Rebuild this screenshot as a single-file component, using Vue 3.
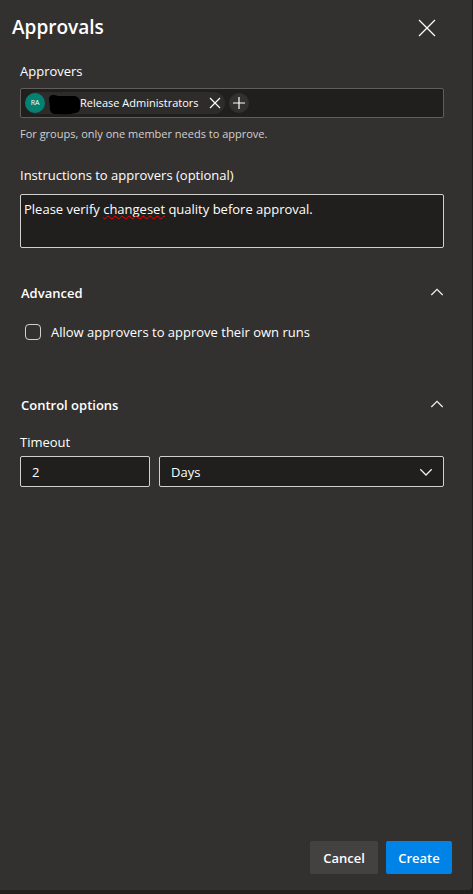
<script setup>
import { computed, ref } from 'vue'

const approvers = ref([{ initials: 'RA', name: 'Release Administrators' }])
const instructions = ref('Please verify changeset quality before approval.')
const allowOwnRuns = ref(false)
const timeout = ref('2')
const unit = ref('Days')
const advancedOpen = ref(true)
const controlOpen = ref(true)

const flaggedWords = ['changeset']
const instructionParts = computed(() =>
  instructions.value
    .split(/(\s+)/)
    .map((text) => ({ text, flagged: flaggedWords.includes(text) }))
)
</script>

<template>
  <form class="panel" @submit.prevent>
    <header class="header">
      <h1 class="title">Approvals</h1>
      <button type="button" class="icon-button close" aria-label="Close">
        <svg width="18" height="18" viewBox="0 0 18 18">
          <path d="M1 1 17 17M17 1 1 17" />
        </svg>
      </button>
    </header>

    <main class="content">
      <section class="field">
        <span id="approvers-label" class="label">Approvers</span>
        <div class="picker" role="group" aria-labelledby="approvers-label">
          <div v-for="person in approvers" :key="person.name" class="chip">
            <span class="avatar">{{ person.initials }}</span>
            <span class="name">
              <svg class="redaction" width="31" height="20" viewBox="0 0 31 20">
                <path d="M0 3Q1 0 4 0Q7 0 9 1H26Q30 2 31 6V14Q30 18 26 18Q20 20 12 19H6Q2 19 1 15Z" />
              </svg>
              <span>{{ person.name }}</span>
            </span>
            <button type="button" class="icon-button remove" aria-label="Remove approver">
              <svg width="12" height="12" viewBox="0 0 12 12">
                <path d="M1 1 11 11M11 1 1 11" />
              </svg>
            </button>
          </div>
          <button type="button" class="icon-button add" aria-label="Add approver">
            <svg width="14" height="14" viewBox="0 0 14 14">
              <path d="M7 1V13M1 7H13" />
            </svg>
          </button>
        </div>
        <p class="help">For groups, only one member needs to approve.</p>
      </section>

      <section class="field instructions">
        <label class="label" for="instructions">Instructions to approvers (optional)</label>
        <div class="note">
          <textarea id="instructions" v-model="instructions" class="note-text" spellcheck="false"></textarea>
          <div class="note-text note-marks" aria-hidden="true"><span
            v-for="(part, i) in instructionParts"
            :key="i"
            :class="{ flagged: part.flagged }"
          >{{ part.text }}</span></div>
        </div>
      </section>

      <section class="group">
        <button type="button" class="group-toggle" :aria-expanded="advancedOpen" @click="advancedOpen = !advancedOpen">
          <span>Advanced</span>
          <svg class="chevron" width="14" height="10" viewBox="0 0 14 10" :class="{ flipped: !advancedOpen }">
            <path d="M1.3 7 7 1.3 12.7 7" />
          </svg>
        </button>
        <label v-if="advancedOpen" class="check">
          <input v-model="allowOwnRuns" type="checkbox" />
          <span>Allow approvers to approve their own runs</span>
        </label>
      </section>

      <section class="group control">
        <button type="button" class="group-toggle" :aria-expanded="controlOpen" @click="controlOpen = !controlOpen">
          <span>Control options</span>
          <svg class="chevron" width="14" height="10" viewBox="0 0 14 10" :class="{ flipped: !controlOpen }">
            <path d="M1.3 7 7 1.3 12.7 7" />
          </svg>
        </button>
        <div v-if="controlOpen" class="timeout">
          <label class="label" for="timeout">Timeout</label>
          <div class="timeout-row">
            <input id="timeout" v-model="timeout" class="box amount" type="text" inputmode="numeric" />
            <div class="unit">
              <select v-model="unit" class="box" aria-label="Timeout unit">
                <option>Minutes</option>
                <option>Hours</option>
                <option>Days</option>
              </select>
              <svg class="chevron" width="14" height="8" viewBox="0 0 14 8">
                <path d="M1.3 1.3 7 7 12.7 1.3" />
              </svg>
            </div>
          </div>
        </div>
      </section>
    </main>

    <footer class="footer">
      <button type="button" class="action">Cancel</button>
      <button type="submit" class="action primary">Create</button>
    </footer>
  </form>
</template>

<style>
body {
  background: #201f1e;
}
</style>

<style scoped>
.panel,
.panel * {
  box-sizing: border-box;
}

.panel {
  display: flex;
  flex-direction: column;
  min-height: calc(100vh - 4px);
  margin-right: 1px;
  border-radius: 0 0 4px 0;
  background: #333130;
  color: #fff;
  font-family: 'Segoe UI', 'Open Sans', 'Noto Sans', sans-serif;
  font-size: 13px;
  line-height: 20px;
}

button,
input,
select,
textarea {
  margin: 0;
  font: inherit;
  color: inherit;
}

svg {
  display: block;
  fill: none;
  stroke: #fff;
  stroke-width: 1.2;
}

.chevron {
  stroke: #eee;
  stroke-width: 1.3;
}

.header {
  display: flex;
  align-items: flex-start;
  justify-content: space-between;
  padding: 12px 36px 0 12px;
}

.title {
  margin: 0;
  font-size: 19px;
  font-weight: 600;
  line-height: 30px;
}

.icon-button {
  display: flex;
  align-items: center;
  justify-content: center;
  padding: 0;
  border: 0;
  background: none;
}

.close {
  height: 32px;
}

.content {
  display: flex;
  flex-direction: column;
  padding: 17px 28px 32px 20px;
}

.field {
  display: flex;
  flex-direction: column;
}

.picker {
  display: flex;
  align-items: center;
  gap: 4px;
  height: 30px;
  margin-top: 7px;
  padding: 0 4px;
  border: 1px solid #605e5c;
  border-radius: 2px;
  background: #201f1e;
}

.chip {
  display: flex;
  align-items: center;
  height: 22px;
  padding-right: 4px;
  border-radius: 11px;
  background: #2d2c2b;
  font-size: 11px;
}

.avatar {
  width: 20px;
  height: 20px;
  margin-right: 4px;
  border-radius: 50%;
  background: #038272;
  font-size: 7px;
  text-align: center;
}

.name {
  display: flex;
  align-items: center;
}

.redaction {
  margin-top: 4px;
}

.redaction path {
  fill: #000;
  stroke: none;
}

.remove {
  width: 12px;
  height: 20px;
  margin-left: 10px;
}

.add {
  width: 20px;
  height: 20px;
  border-radius: 50%;
  background: #333130;
}

.help {
  margin: 6px 0 0;
  color: #d2d0ce;
  font-size: 11px;
}

.instructions {
  margin-top: 21px;
}

.note {
  display: grid;
  margin-top: 9px;
}

.note-text {
  grid-area: 1 / 1;
  width: 100%;
  height: 54px;
  padding: 4px 3px;
  border: 1px solid #d2d0ce;
  border-radius: 2px;
  outline: 0;
  background: #201f1e;
  resize: none;
  overflow: hidden;
  white-space: pre-wrap;
}

.note-marks {
  border-color: transparent;
  background: none;
  color: transparent;
  pointer-events: none;
}

.flagged {
  text-decoration: underline wavy #f00 1px;
  text-decoration-skip-ink: none;
  text-underline-offset: 1px;
}

.group {
  margin-top: 35px;
}

.group-toggle {
  display: flex;
  align-items: center;
  justify-content: space-between;
  width: 100%;
  padding: 0 0 0 1px;
  border: 0;
  background: none;
  font-weight: 600;
}

.flipped {
  transform: rotate(180deg);
}

.check {
  display: flex;
  align-items: center;
  gap: 10px;
  margin-top: 19px;
  padding-left: 5px;
}

.check input {
  width: 16px;
  height: 16px;
  border: 1px solid #d2d0ce;
  border-radius: 4px;
  appearance: none;
}

.check input:checked {
  background: #0083e7;
}

.control {
  margin-top: 53px;
}

.timeout {
  margin-top: 17px;
}

.label {
  display: block;
}

.timeout-row {
  display: flex;
  gap: 9px;
  margin-top: 4px;
}

.box {
  width: 100%;
  height: 31px;
  padding: 0 11px;
  border: 1px solid #d2d0ce;
  border-radius: 2px;
  outline: 0;
  background: #201f1e;
  appearance: none;
}

.amount {
  width: 130px;
}

.unit {
  display: grid;
  flex: 1;
  align-items: center;
}

.unit > * {
  grid-area: 1 / 1;
}

.unit svg {
  justify-self: end;
  margin-right: 11px;
  pointer-events: none;
}

.footer {
  display: flex;
  justify-content: flex-end;
  gap: 8px;
  margin-top: auto;
  padding: 0 20px 16px;
}

.action {
  min-width: 68px;
  height: 33px;
  padding: 0 12px;
  border: 0;
  border-radius: 2px;
  background: #444241;
  font-weight: 600;
}

.primary {
  min-width: 66px;
  background: #0083e7;
}
</style>
